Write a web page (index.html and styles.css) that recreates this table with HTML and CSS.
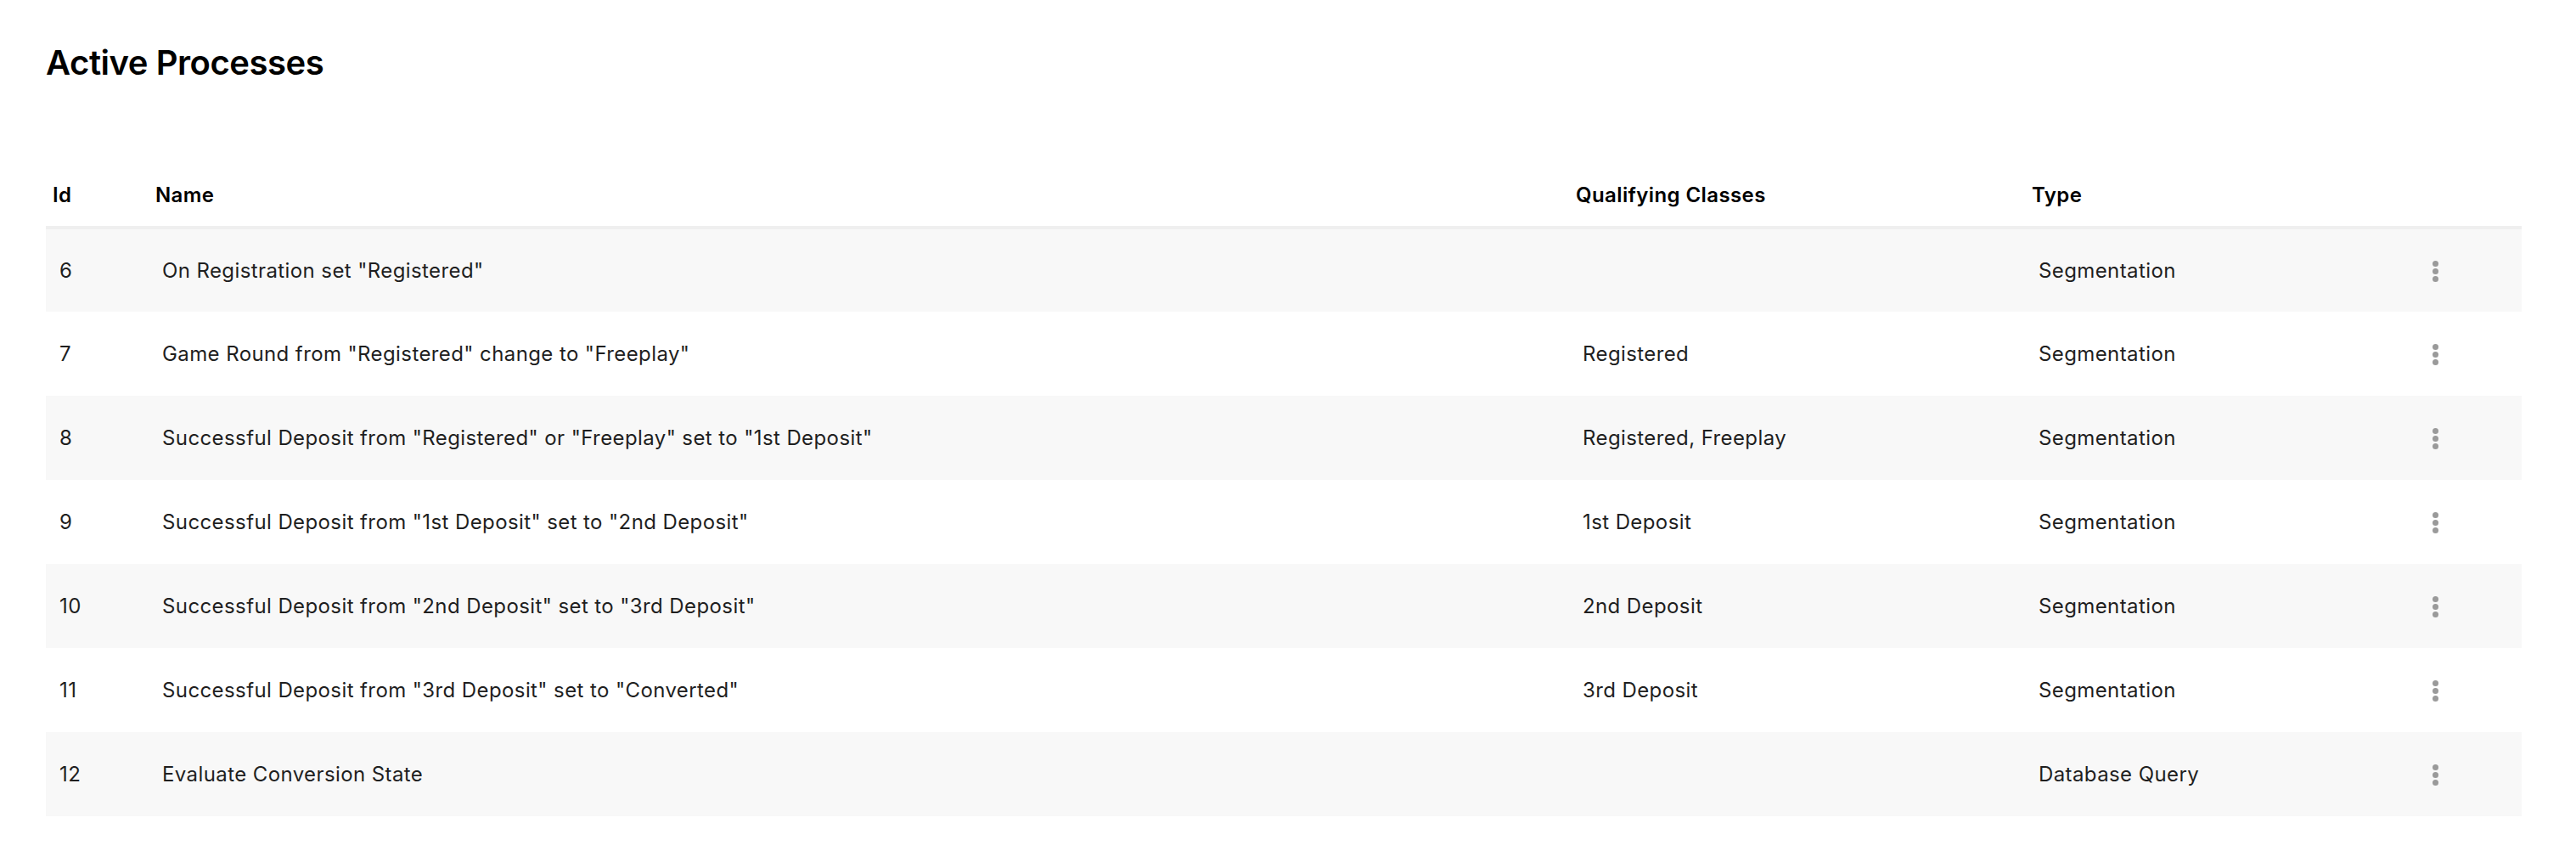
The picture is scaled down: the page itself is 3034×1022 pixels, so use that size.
FILE: index.html
```html
<!DOCTYPE html>
<html lang="en">
<head>
<meta charset="utf-8">
<title>Active Processes</title>
<link rel="stylesheet" href="styles.css">
</head>
<body>
<main class="page">
  <h1 class="title">Active Processes</h1>
  <table class="proc-table">
    <colgroup>
      <col class="col-id">
      <col class="col-name">
      <col class="col-classes">
      <col class="col-type">
      <col class="col-actions">
    </colgroup>
    <thead>
      <tr>
        <th>Id</th>
        <th>Name</th>
        <th>Qualifying Classes</th>
        <th>Type</th>
        <th></th>
      </tr>
    </thead>
    <tbody>
      <tr>
        <td>6</td>
        <td>On Registration set "Registered"</td>
        <td></td>
        <td>Segmentation</td>
        <td class="actions"><span class="kebab"><i></i><i></i><i></i></span></td>
      </tr>
      <tr>
        <td>7</td>
        <td>Game Round from "Registered" change to "Freeplay"</td>
        <td>Registered</td>
        <td>Segmentation</td>
        <td class="actions"><span class="kebab"><i></i><i></i><i></i></span></td>
      </tr>
      <tr>
        <td>8</td>
        <td>Successful Deposit from "Registered" or "Freeplay" set to "1st Deposit"</td>
        <td>Registered, Freeplay</td>
        <td>Segmentation</td>
        <td class="actions"><span class="kebab"><i></i><i></i><i></i></span></td>
      </tr>
      <tr>
        <td>9</td>
        <td>Successful Deposit from "1st Deposit" set to "2nd Deposit"</td>
        <td>1st Deposit</td>
        <td>Segmentation</td>
        <td class="actions"><span class="kebab"><i></i><i></i><i></i></span></td>
      </tr>
      <tr>
        <td>10</td>
        <td>Successful Deposit from "2nd Deposit" set to "3rd Deposit"</td>
        <td>2nd Deposit</td>
        <td>Segmentation</td>
        <td class="actions"><span class="kebab"><i></i><i></i><i></i></span></td>
      </tr>
      <tr>
        <td>11</td>
        <td>Successful Deposit from "3rd Deposit" set to "Converted"</td>
        <td>3rd Deposit</td>
        <td>Segmentation</td>
        <td class="actions"><span class="kebab"><i></i><i></i><i></i></span></td>
      </tr>
      <tr>
        <td>12</td>
        <td>Evaluate Conversion State</td>
        <td></td>
        <td>Database Query</td>
        <td class="actions"><span class="kebab"><i></i><i></i><i></i></span></td>
      </tr>
    </tbody>
  </table>
</main>
</body>
</html>
```
FILE: styles.css
```css
* { box-sizing: border-box; }

html, body {
  margin: 0;
  padding: 0;
  background: #ffffff;
}

body {
  font-family: Inter, "Noto Sans", "Liberation Sans", sans-serif;
  color: #1f1f1f;
}

.page {
  padding: 50px 64px 40px 54px;
}

.title {
  margin: 0;
  font-size: 40px;
  line-height: 48px;
  font-weight: 600;
  letter-spacing: -0.45px;
  color: #000;
}

.proc-table {
  margin-top: 96px;
  width: 2916px;
  table-layout: fixed;
  border-collapse: collapse;
  border-spacing: 0;
}

.col-id { width: 121px; }
.col-name { width: 1673px; }
.col-classes { width: 537px; }
.col-type { width: 381px; }
.col-actions { width: 204px; }

.proc-table th {
  text-align: left;
  font-size: 24px;
  line-height: 32px;
  font-weight: 600;
  letter-spacing: 0.4px;
  color: #000;
  padding: 20px 8px 20px 8px;
  border-bottom: 4px solid #efefef;
}

.proc-table td {
  height: 99px;
  padding: 0 16px;
  font-size: 24px;
  line-height: 32px;
  font-weight: 400;
  letter-spacing: 0.4px;
  color: #1f1f1f;
  vertical-align: middle;
  white-space: nowrap;
}

.proc-table tbody tr:nth-child(odd) td {
  background: #f8f8f8;
}

.proc-table td.actions {
  text-align: center;
  padding: 0;
}

.kebab {
  display: inline-flex;
  flex-direction: column;
  align-items: center;
  gap: 2px;
  vertical-align: middle;
}

.kebab i {
  display: block;
  width: 7px;
  height: 7px;
  border-radius: 50%;
  background: #9a9a9a;
}
```
